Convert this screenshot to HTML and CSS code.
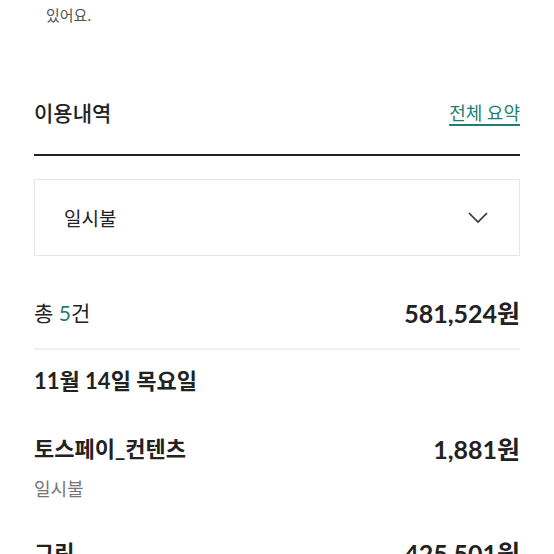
FILE: index.html
```html
<!DOCTYPE html>
<html lang="ko">
<head>
<meta charset="utf-8">
<link rel="stylesheet" href="styles.css">
</head>
<body>
<div class="page">
  <p class="note">있어요.</p>
  <div class="head">
    <h2 class="title">이용내역</h2>
    <a class="summary">전체 요약</a>
  </div>
  <div class="select">
    <span class="select-text">일시불</span>
    <svg class="chev" width="20" height="12" viewBox="0 0 20 12"><path d="M1 1 L10 10 L19 1" fill="none" stroke="#333" stroke-width="1.6"/></svg>
  </div>
  <div class="total">
    <span class="count">총 <em>5</em>건</span>
    <span class="sum">581,524원</span>
  </div>
  <div class="date">11월 14일 목요일</div>
  <div class="item">
    <div class="item-row">
      <span class="item-name">토스페이_컨텐츠</span>
      <span class="item-amt">1,881원</span>
    </div>
    <div class="item-sub">일시불</div>
  </div>
  <div class="item item-next">
    <div class="item-row">
      <span class="item-name">그린</span>
      <span class="item-amt">425,501원</span>
    </div>
  </div>
</div>
</body>
</html>
```

FILE: styles.css
```css
html, body {
  margin: 0;
  padding: 0;
  background: #fff;
}
body {
  font-family: Lato, "Noto Sans CJK KR", sans-serif;
  color: #222;
  overflow: hidden;
  height: 554px;
}
.page {
  padding: 0 34px;
}
.note {
  margin: 0;
  padding: 4px 0 0 12px;
  font-size: 15px;
  line-height: 22px;
  color: #555;
}
.head {
  display: flex;
  justify-content: space-between;
  align-items: center;
  margin-top: 73px;
  height: 28px;
  padding-bottom: 27px;
  border-bottom: 2px solid #222;
}
.title {
  margin: 0;
  font-size: 21px;
  line-height: 28px;
  font-weight: 500;
  color: #222;
}
.summary {
  font-size: 18px;
  line-height: 28px;
  color: #1f7d76;
  text-decoration: underline;
  text-underline-offset: 4px;
  text-decoration-thickness: 1.5px;
}
.select {
  margin-top: 23px;
  height: 75px;
  border: 1px solid #e6e6e6;
  display: flex;
  align-items: center;
  justify-content: space-between;
  padding: 0 31px 0 29px;
}
.select-text {
  font-size: 19px;
  color: #222;
}
.chev {
  display: block;
}
.total {
  display: flex;
  justify-content: space-between;
  align-items: center;
  padding: 45px 0 23px;
  height: 24px;
  border-bottom: 2px solid #f0f0f0;
}
.count {
  font-size: 21px;
  line-height: 24px;
  color: #222;
}
.count em {
  font-style: normal;
  color: #1f7d76;
}
.sum {
  font-size: 25px;
  line-height: 24px;
  font-weight: 700;
  color: #222;
}
.date {
  padding-top: 19px;
  font-size: 22px;
  line-height: 24px;
  font-weight: 700;
  color: #222;
}
.item {
  padding-top: 44px;
}
.item-next {
  padding-top: 40px;
}
.item-row {
  display: flex;
  justify-content: space-between;
  align-items: center;
  height: 24px;
}
.item-name {
  font-size: 22px;
  line-height: 24px;
  font-weight: 600;
  color: #222;
}
.item-amt {
  font-size: 25px;
  line-height: 24px;
  font-weight: 700;
  color: #222;
}
.item-sub {
  margin-top: 16px;
  font-size: 18px;
  line-height: 24px;
  color: #777;
}
```
